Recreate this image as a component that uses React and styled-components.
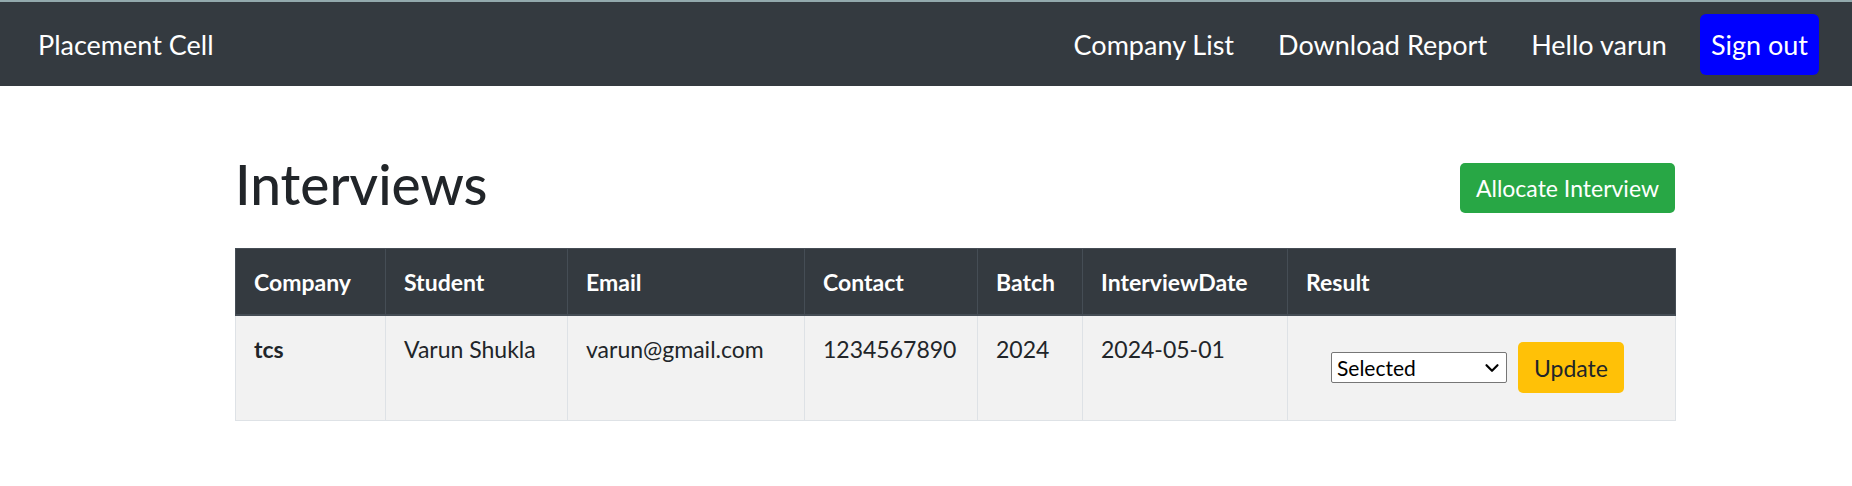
import React, { useState } from 'react';
import styled, { createGlobalStyle } from 'styled-components';
import { ChevronDown } from 'lucide-react';

const GlobalStyle = createGlobalStyle`
  body {
    margin: 0;
    background: #fff;
    color: #212529;
    font-family: Lato, 'Noto Sans', sans-serif;
  }
`;

const Navbar = styled.nav`
  height: 84px;
  border-top: 2px solid #93a9ad;
  background-color: #343a40;
  display: flex;
  align-items: center;
  justify-content: space-between;
  padding: 0 33px 0 38px;
`;

const Brand = styled.a`
  color: #fff;
  font-size: 27px;
  line-height: 1;
  text-decoration: none;
`;

const NavList = styled.div`
  display: flex;
  align-items: center;
`;

const NavLink = styled.a`
  color: #fff;
  font-size: 27px;
  line-height: 1;
  padding: 0 22px;
  text-decoration: none;
`;

const SignOut = styled.button`
  height: 61px;
  margin-left: 11px;
  padding: 0 11px;
  border: none;
  border-radius: 6px;
  background-color: #0000ff;
  color: #fff;
  font-family: inherit;
  font-size: 27px;
`;

const Container = styled.main`
  width: 1440px;
  margin: 77px 0 0 235px;
`;

const TitleRow = styled.div`
  height: 50px;
  display: flex;
  align-items: center;
  justify-content: space-between;
`;

const Title = styled.h1`
  margin: 0 0 8px;
  font-size: 55px;
  font-weight: 500;
  line-height: 1;
`;

const Button = styled.button`
  height: ${p => p.$height}px;
  padding: 0 16px;
  border: none;
  border-radius: 5px;
  background-color: ${p => p.$bg};
  color: ${p => p.$color};
  font-family: inherit;
  font-size: 23px;
`;

const Table = styled.table`
  width: 100%;
  margin-top: 35px;
  border-collapse: collapse;
  table-layout: fixed;
  font-size: 23px;
  line-height: 36px;
`;

const Th = styled.th`
  height: 65px;
  box-sizing: border-box;
  padding: 15px 18px 14px;
  text-align: left;
  vertical-align: top;
  font-weight: 700;
  color: #fff;
  background-color: #343a40;
  border: 1px solid #454d55;
  border-bottom-width: 2px;
`;

const Td = styled.td`
  height: 105px;
  box-sizing: border-box;
  padding: ${p => (p.$center ? '0 18px 0 43px' : '15px 18px')};
  vertical-align: ${p => (p.$center ? 'middle' : 'top')};
  font-weight: ${p => (p.$bold ? 700 : 400)};
  background-color: #f2f2f2;
  border: 1px solid #dee2e6;
`;

const ResultForm = styled.form`
  display: flex;
  align-items: center;
  gap: 11px;
`;

const SelectWrap = styled.div`
  position: relative;
  display: flex;

  svg {
    position: absolute;
    right: 4px;
    top: 5px;
    pointer-events: none;
    color: #000;
  }
`;

const Select = styled.select`
  width: 176px;
  height: 31px;
  padding: 0 26px 0 5px;
  border: 1px solid #767676;
  border-radius: 2px;
  background: #fff;
  color: #000;
  font-family: inherit;
  font-size: 21px;
  appearance: none;
`;

const columns = [
  { label: 'Company', width: 150 },
  { label: 'Student', width: 182 },
  { label: 'Email', width: 237 },
  { label: 'Contact', width: 173 },
  { label: 'Batch', width: 105 },
  { label: 'InterviewDate', width: 205 },
  { label: 'Result', width: 388 },
];

const interviews = [
  {
    company: 'tcs',
    student: 'Varun Shukla',
    email: 'varun@gmail.com',
    contact: '1234567890',
    batch: '2024',
    date: '2024-05-01',
    result: 'Selected',
  },
];

const App = () => {
  const [results, setResults] = useState(interviews.map(i => i.result));

  return (
    <>
      <GlobalStyle />
      <Navbar>
        <Brand href="#">Placement Cell</Brand>
        <NavList>
          <NavLink href="#">Company List</NavLink>
          <NavLink href="#">Download Report</NavLink>
          <NavLink href="#">Hello varun</NavLink>
          <SignOut>Sign out</SignOut>
        </NavList>
      </Navbar>

      <Container>
        <TitleRow>
          <Title>Interviews</Title>
          <Button $height={50} $bg="#28a745" $color="#fff">
            Allocate Interview
          </Button>
        </TitleRow>

        <Table>
          <colgroup>
            {columns.map(c => (
              <col key={c.label} style={{ width: c.width }} />
            ))}
          </colgroup>
          <thead>
            <tr>
              {columns.map(c => (
                <Th key={c.label}>{c.label}</Th>
              ))}
            </tr>
          </thead>
          <tbody>
            {interviews.map((row, idx) => (
              <tr key={idx}>
                <Td $bold>{row.company}</Td>
                <Td>{row.student}</Td>
                <Td>{row.email}</Td>
                <Td>{row.contact}</Td>
                <Td>{row.batch}</Td>
                <Td>{row.date}</Td>
                <Td $center>
                  <ResultForm onSubmit={e => e.preventDefault()}>
                    <SelectWrap>
                      <Select
                        value={results[idx]}
                        onChange={e => {
                          const next = [...results];
                          next[idx] = e.target.value;
                          setResults(next);
                        }}
                      >
                        <option>Selected</option>
                        <option>Not Selected</option>
                        <option>On Hold</option>
                        <option>Did not Attempt</option>
                      </Select>
                      <ChevronDown size={22} strokeWidth={2.4} />
                    </SelectWrap>
                    <Button type="submit" $height={51} $bg="#ffc107" $color="#212529">
                      Update
                    </Button>
                  </ResultForm>
                </Td>
              </tr>
            ))}
          </tbody>
        </Table>
      </Container>
    </>
  );
};

export default App;
